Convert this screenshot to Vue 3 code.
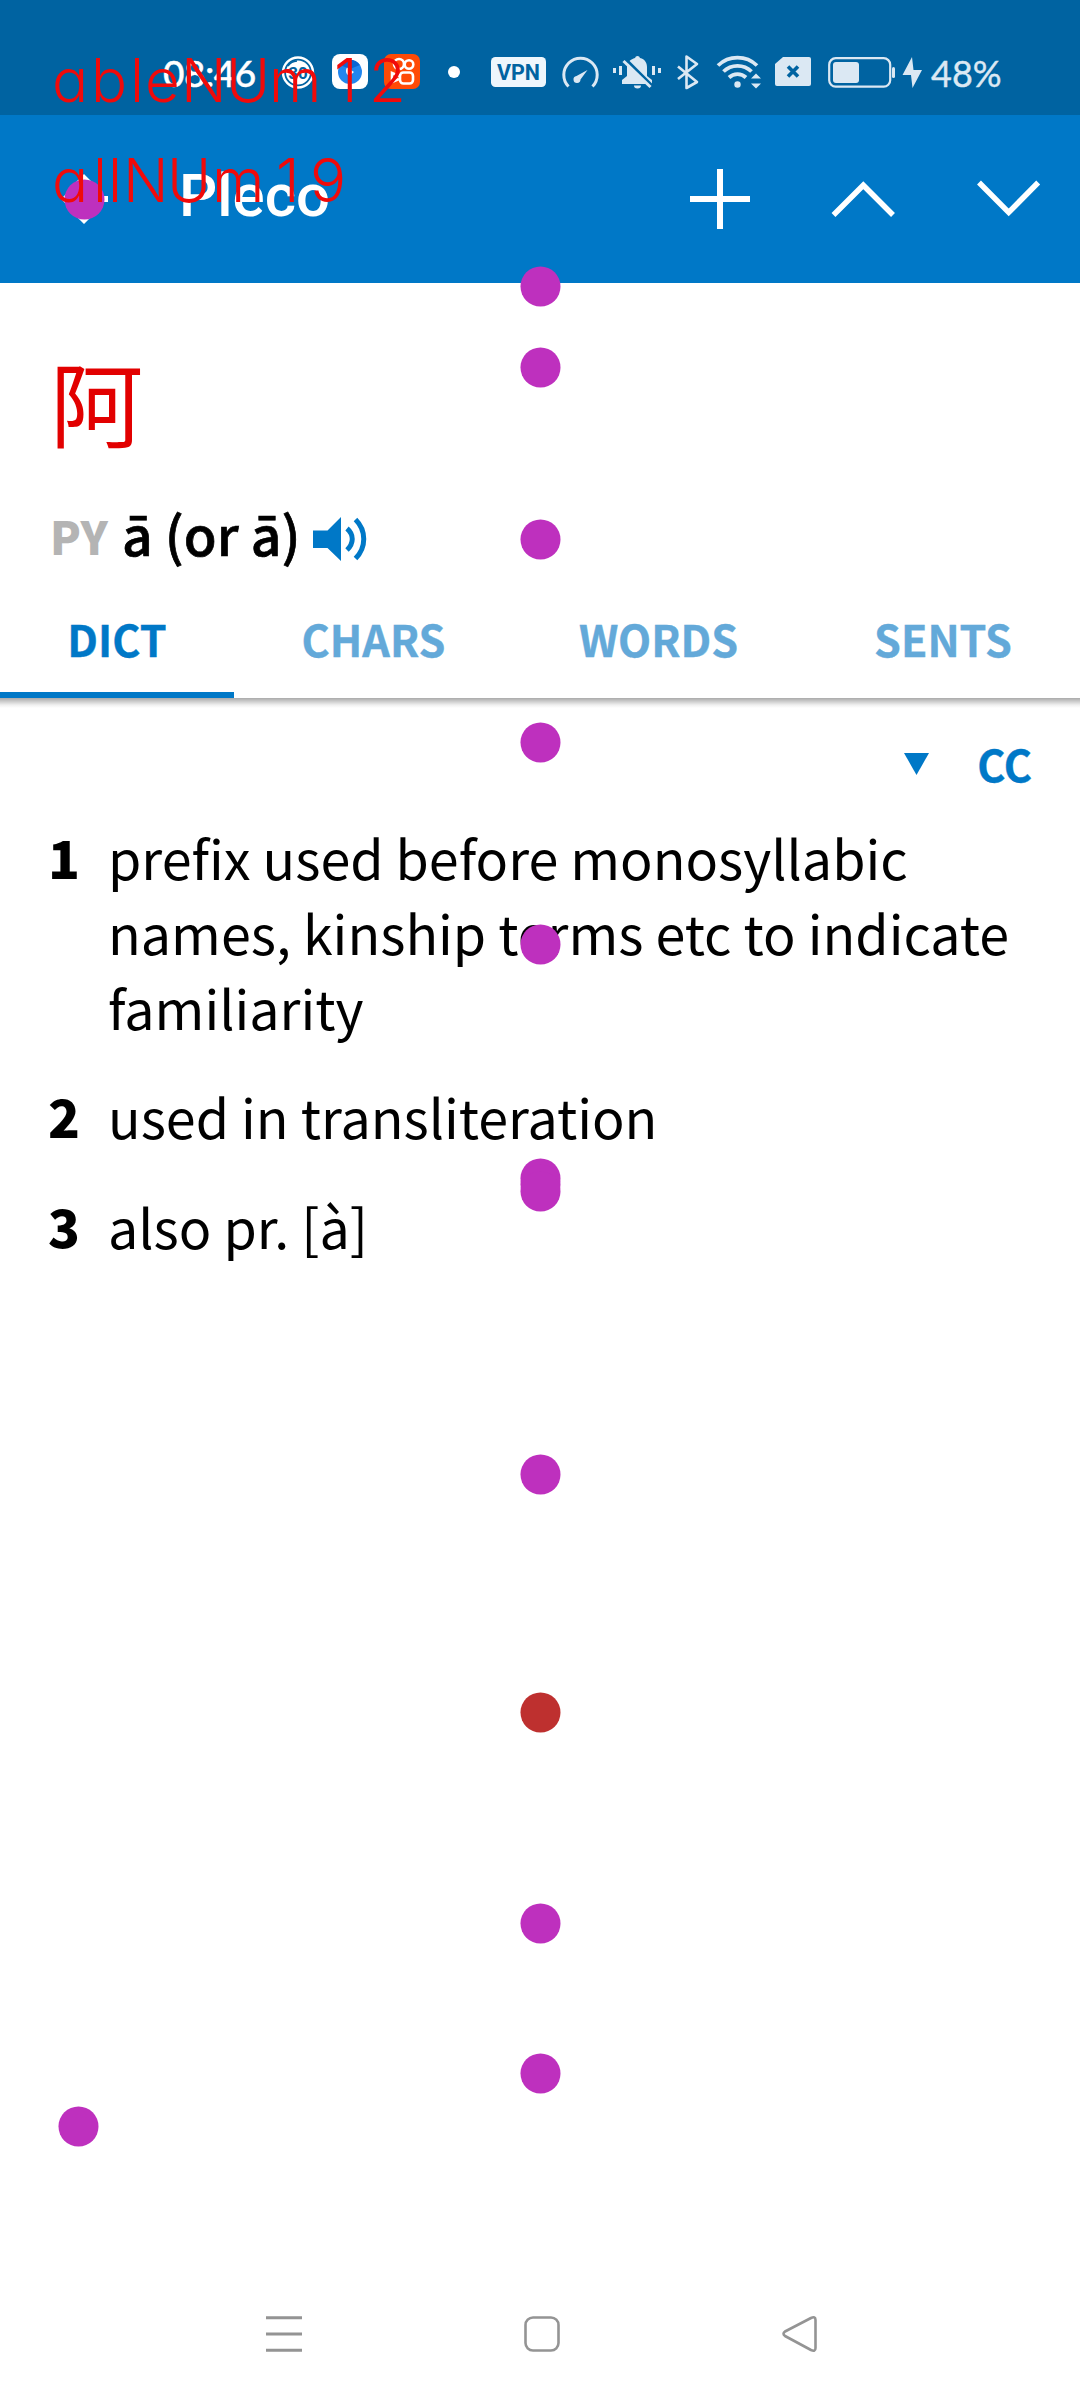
<script setup>
const tabs = [
  { label: 'DICT', width: 234, active: true },
  { label: 'CHARS', width: 279 },
  { label: 'WORDS', width: 291 },
  { label: 'SENTS', width: 278 },
]
const senses = [
  'prefix used before monosyllabic names, kinship terms etc to indicate familiarity',
  'used in transliteration',
  'also pr. [à]',
]
const markers = [
  [84, 199], [540, 286], [540, 367], [540, 539], [540, 742], [540, 944],
  [540, 1178], [540, 1184], [540, 1191], [540, 1474], [540, 1712, true], [540, 1923],
  [540, 2073], [78, 2126],
]
</script>

<template>
  <div class="screen">
    <header class="status">
      <span class="time">08:46</span>
      <svg class="i-timer" width="36" height="36" viewBox="280 54 36 36">
        <circle cx="298" cy="72.5" r="15" fill="none" stroke="#fff" stroke-width="2.4" />
        <circle cx="298" cy="72.5" r="12" fill="#fff" />
        <path d="M288 66a12 12 0 0 1 9-5" fill="none" stroke="#0063a1" stroke-width="1.4" />
        <text x="298" y="79" text-anchor="middle" class="timer-text">30</text>
      </svg>
      <svg class="i-app" width="36" height="36" viewBox="332 55 36 36">
        <rect x="332" y="55" width="36" height="35" rx="8" fill="#fff" />
        <circle cx="350" cy="73" r="12" fill="#2186ee" />
        <path d="M340 66a12 12 0 0 1 20 0l-10 4z" fill="#0b66d2" />
        <path d="M347 68.500l7 4.500-4 3.500c-4 0-5-5-3-8z" fill="#fff" />
      </svg>
      <svg class="i-app" width="36" height="36" viewBox="384 55 36 36">
        <rect x="384" y="55" width="36" height="35" rx="7" fill="#ff4a06" />
        <g fill="none" stroke="#fff" stroke-width="2.6">
          <circle cx="399" cy="65" r="5" /><circle cx="409" cy="65.5" r="4.3" />
          <rect x="400" y="73.500" width="13" height="11" rx="3.500" />
          <path d="M399 77l-7-3v9l7-3" />
        </g>
      </svg>
      <svg class="i-dot" width="12" height="36" viewBox="448 54 12 36"><circle cx="454" cy="72" r="6" fill="#fff" /></svg>
      <svg class="i-vpn" width="55" height="36" viewBox="491 54 55 36">
        <rect x="491" y="57" width="55" height="30" rx="4.500" fill="#eef6fc" />
        <text x="518.500" y="80" text-anchor="middle" textLength="43" lengthAdjust="spacingAndGlyphs" class="vpn-text">VPN</text>
      </svg>
      <svg class="i-speed" width="38" height="36" viewBox="562 54 38 36">
        <path d="M568.500 86.500A16.700 16.700 0 1 1 592.500 86.500" fill="none" stroke="#dbe8f3" stroke-width="3" />
        <path d="M587.500 70L580.500 79.500A3.500 3.500 0 1 1 576.500 76z" fill="#dbe8f3" />
      </svg>
      <svg class="i-bell" width="50" height="36" viewBox="612 54 50 36">
        <g fill="#dbe8f3">
          <path d="M622 84v-4l5-4v-9c0-5 4-8 8-9a2.600 2.600 0 0 1 5 0c5 1 7 5 7 9v9l5 4v4z" />
          <path d="M634 85.500h7a3.500 3 0 0 1-7 0z" />
          <path d="M613 68h3v5h-3zM619 66h3v9h-3zM652 66h3v9h-3zM658 68h3v5h-3z" />
        </g>
        <path d="M625.500 59l27 27" stroke="#0063a1" stroke-width="3" />
        <path d="M623.500 61l27 26" stroke="#dbe8f3" stroke-width="3" />
      </svg>
      <svg class="i-bt" width="24" height="36" viewBox="676 54 24 36">
        <path d="M678 66.500l19 15.500-10.500 6V56.500L697 64 678 79" fill="none" stroke="#dbe8f3" stroke-width="2.600" stroke-linejoin="round" />
      </svg>
      <svg class="i-wifi" width="46" height="36" viewBox="716 54 46 36">
        <g fill="none" stroke="#dbe8f3" stroke-width="3.800">
          <path d="M718 65.500a28 28 0 0 1 39 0" />
          <path d="M723.500 71.500a20 20 0 0 1 28 0" />
          <path d="M729 77.500a12.500 12.500 0 0 1 17 0" />
        </g>
        <circle cx="737.500" cy="84.500" r="3.200" fill="#dbe8f3" />
        <path d="M751 78.500l5-5 5 5zM751 83.500l5 5 5-5z" fill="#dbe8f3" />
      </svg>
      <svg class="i-sim" width="36" height="36" viewBox="775 54 36 36">
        <path d="M783 57h26a2 2 0 0 1 2 2v25a2 2 0 0 1-2 2h-32a2 2 0 0 1-2-2V64z" fill="#dbe8f3" />
        <path d="M788 66.500l10 10M798 66.500l-10 10" stroke="#0063a1" stroke-width="3.600" />
      </svg>
      <svg class="i-batt" width="68" height="36" viewBox="828 54 68 36">
        <rect x="829.200" y="58.200" width="61" height="28.500" rx="6.500" fill="none" stroke="#dbe8f3" stroke-width="2.200" />
        <rect x="833" y="62" width="26" height="21" rx="3" fill="#dbe8f3" />
        <rect x="892" y="67" width="3" height="11" rx="1.500" fill="#dbe8f3" />
      </svg>
      <svg class="i-bolt" width="20" height="36" viewBox="902 54 20 36">
        <path d="M912 57L902.500 75h8.500L912.500 88l9.500-18h-8.500z" fill="#dbe8f3" />
      </svg>
      <span class="percent">48%</span>
    </header>

    <div class="toolbar">
      <svg class="move" width="50" height="50" viewBox="-25 -25 50 50">
        <path d="M0-25l9 9H-9zM0 25l9-9H-9zM-23 0l9-9V9zM14-3h10v6H14z" fill="#fff" />
      </svg>
      <h1>Pleco</h1>
      <svg class="actions" width="360" height="66" viewBox="686 166 360 66" fill="none" stroke="#fff" stroke-width="6">
        <path d="M690 199h60M720 169v60" />
        <path d="M833.500 215l29.800-29.800L893 215" stroke-width="5.500" />
        <path d="M979 182.500l29.700 29.900 29.500-29.900" stroke-width="5.500" />
      </svg>
    </div>

    <section class="head">
      <div class="hanzi">阿</div>
      <div class="pron">
        <span class="py">PY</span>
        <span class="reading">ā (or ā)</span>
        <svg class="speaker" width="54" height="46" viewBox="313 515 54 46">
          <path d="M313 529.500h14.500L341 516v44l-13.500-13H313z" fill="#0078c7" />
          <path d="M347 527.500c7 6 7 15 0 21.500M355.500 518.500c11 11 11 28 0 39" fill="none" stroke="#0078c7" stroke-width="5" />
        </svg>
      </div>
    </section>

    <nav class="tabs">
      <div v-for="t in tabs" :key="t.label" class="tab" :class="{ active: t.active }" :style="{ width: t.width + 'px' }">{{ t.label }}</div>
    </nav>

    <main class="body">
      <div class="source">
        <svg width="26" height="22" viewBox="0 0 26 22"><path d="M0 0h25L12.500 22z" fill="#0078c7" /></svg>
        <span>CC</span>
      </div>
      <div v-for="(s, i) in senses" :key="i" class="sense">
        <b>{{ i + 1 }}</b>
        <p>{{ s }}</p>
      </div>
    </main>

    <footer class="sysnav">
      <svg width="36" height="40" viewBox="266 2314 36 40"><path d="M266 2317.700h36M266 2334h36M266 2350.300h36" stroke="#949494" stroke-width="3" /></svg>
      <svg width="36" height="40" viewBox="524 2314 36 40"><rect x="525.500" y="2317.500" width="33" height="33" rx="7.500" fill="none" stroke="#949494" stroke-width="2.600" /></svg>
      <svg width="36" height="40" viewBox="782 2314 36 40"><path d="M785 2331.500L811 2318q4.500-2 4.500 2v28q0 4-4.500 2L785 2336q-3-2.200 0-4.500z" fill="none" stroke="#949494" stroke-width="2.600" stroke-linejoin="round" /></svg>
    </footer>

    <svg class="overlay" width="1080" height="2400" viewBox="0 0 1080 2400">
      <circle v-for="(m, i) in markers" :key="i" :cx="m[0] + 0.5" :cy="m[1] + 0.5" r="20" :fill="m[2] ? '#be302f' : '#be30be'" />
      <text y="101.500" x="52 91 130 145 181 226 269 334 369">ableNUm12</text>
      <text y="201.500" x="52 93 108 123 167 212 276 310">allNUm19</text>
    </svg>
  </div>
</template>

<style>
body { background: #fff; }
</style>

<style scoped>
.screen { position: relative; width: 1080px; height: 2400px; overflow: hidden; display: flex; flex-direction: column; background: #fff; font-family: "Noto Sans CJK SC", "Noto Sans", sans-serif; color: #000; }
.screen svg { flex: none; display: block; }
.status { box-sizing: border-box; height: 115px; flex: none; background: #0063a1; display: flex; align-items: flex-start; padding: 54px 0 0 163px; }
.time { width: 117px; font: 500 37px/37px Lato, sans-serif; color: #fff; letter-spacing: -0.5px; white-space: nowrap; -webkit-text-stroke: 0.4px #fff; }
.percent { margin-left: 9px; font: 400 36px/38px Lato, sans-serif; color: #dbe8f3; white-space: nowrap; -webkit-text-stroke: 0.4px #dbe8f3; }
.timer-text { font: 700 17px Roboto, sans-serif; fill: #0063a1; }
.vpn-text { font: 700 22px Roboto, sans-serif; fill: #0063a1; }
.i-app, .i-speed { margin-left: 16px; }
.i-dot { margin-left: 28px; }
.i-vpn { margin-left: 31px; }
.i-bell { margin-left: 12px; }
.i-bt { margin-left: 14px; }
.i-wifi { margin-left: 16px; }
.i-sim { margin-left: 13px; }
.i-batt { margin-left: 17px; }
.i-bolt { margin-left: 6px; }
.toolbar { height: 168px; flex: none; background: #0078c7; display: flex; align-items: center; padding-left: 59px; }
h1 { margin: 0 0 6px 70px; width: 507px; font: 500 60px/72px Roboto, sans-serif; color: #fff; }
.head { height: 316px; flex: none; padding-left: 50px; }
.hanzi { margin-top: 43px; font-size: 93.500px; line-height: 150px; color: #e20000; }
.pron { display: flex; align-items: center; height: 80px; margin-top: 23px; white-space: nowrap; }
.py { width: 72px; margin-top: -7px; font-size: 45px; font-weight: 900; line-height: 80px; color: #b4b4b4; }
.reading { width: 191px; margin-top: -12px; font-size: 53.500px; font-weight: 500; line-height: 76px; -webkit-text-stroke: 0.7px #000; }
.tabs { height: 99px; flex: none; display: flex; }
.tab { box-sizing: border-box; flex: none; height: 99px; text-align: center; font-size: 43px; font-weight: 700; line-height: 79px; color: #63a9d9; -webkit-text-stroke: 0.4px currentColor; }
.tab.active { color: #0078c7; border-bottom: 6px solid #0078c7; }
.body { flex: 1; padding: 0 48px; background: linear-gradient(#aaa, #c8c8c8 3px, #f0f0f0 7px, #fff 10px) no-repeat; }
.source { display: flex; justify-content: flex-end; align-items: center; gap: 47px; height: 60px; padding-top: 36px; margin-bottom: 24.500px; font-size: 43px; font-weight: 700; line-height: 60px; color: #0078c7; -webkit-text-stroke: 0.4px currentColor; }
.source span { margin-top: -3px; }
.sense { display: flex; margin-bottom: 34.500px; font-size: 53.800px; line-height: 75px; }
.sense b { width: 60px; flex: none; font-size: 52.500px; font-weight: 900; }
.sense p { margin: 0; width: 920px; flex: none; }
.sysnav { height: 132px; flex: none; display: flex; align-items: center; gap: 222px; padding-left: 266px; }
.overlay { position: absolute; left: 0; top: 0; pointer-events: none; }
.overlay text { font: 300 60px Inter, sans-serif; font-feature-settings: "cv11"; fill: #f00a0a; }
</style>
